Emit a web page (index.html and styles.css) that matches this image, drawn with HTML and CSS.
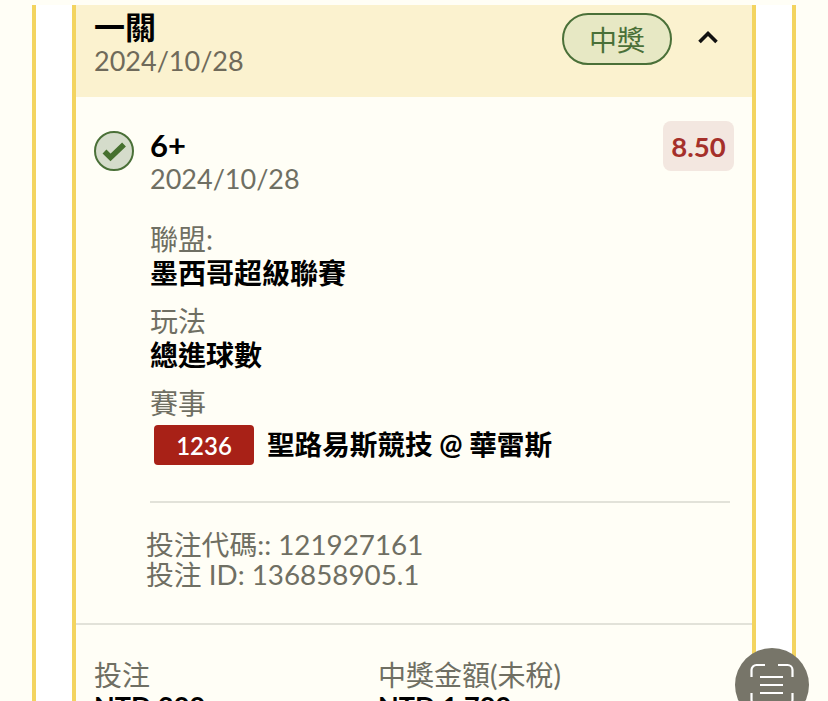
FILE: index.html
```html
<!DOCTYPE html>
<html lang="zh-Hant">
<head>
    <meta charset="UTF-8">
    <meta name="viewport" content="width=device-width, initial-scale=1.0">
    <title>投注紀錄</title>
    <link rel="stylesheet" href="styles.css">
</head>
<body>

<div class="outer">
    <div class="card">
        <header class="card-head">
            <div>
                <div class="head-title">一關</div>
                <div class="head-date">2024/10/28</div>
            </div>
            <div class="head-right">
                <span class="won-pill">中獎</span>
                <svg class="chevron" width="20" height="14" viewBox="0 0 20 14">
                    <path d="M1.500 12 10 3.500 18.500 12" fill="none" stroke="#111" stroke-width="3.600"/>
                </svg>
            </div>
        </header>

        <section class="leg">
            <svg class="check" width="40" height="40" viewBox="0 0 40 40">
                <circle cx="20" cy="20" r="19" fill="#d5dccb" stroke="#4a7038" stroke-width="2"/>
                <path d="M10.500 20.500 16.500 26.500 30 13.500" fill="none" stroke="#46702f" stroke-width="5.500"/>
            </svg>
            <div class="leg-body">
                <div class="leg-top">
                    <div>
                        <div class="pick">6+</div>
                        <div class="leg-date">2024/10/28</div>
                    </div>
                    <span class="odds">8.50</span>
                </div>

                <div class="field field-first">
                    <div class="field-label">聯盟:</div>
                    <div class="field-value">墨西哥超級聯賽</div>
                </div>
                <div class="field">
                    <div class="field-label">玩法</div>
                    <div class="field-value">總進球數</div>
                </div>
                <div class="field">
                    <div class="field-label">賽事</div>
                    <div class="match">
                        <span class="match-no">1236</span>
                        <span class="match-name">聖路易斯競技 @ 華雷斯</span>
                    </div>
                </div>
                <hr class="rule">
            </div>
        </section>

        <div class="codes">
            <div>投注代碼:: 121927161</div>
            <div>投注 ID: 136858905.1</div>
        </div>

        <div class="totals">
            <div class="total">
                <div class="field-label">投注</div>
                <div class="total-value">NTD 200</div>
            </div>
            <div class="total">
                <div class="field-label">中獎金額(未稅)</div>
                <div class="total-value">NTD 1,700</div>
            </div>
        </div>
    </div>
</div>

<button class="scan-btn" type="button" aria-label="掃描">
    <svg width="44" height="44" viewBox="0 0 44 44">
        <path d="M1.500 14V7a5 5 0 0 1 5-5H15M28 2h9.500a5 5 0 0 1 5 5v7M1.500 30v7a5 5 0 0 0 5 5H15M28 42h9.500a5 5 0 0 0 5-5v-7" fill="none" stroke="#fff" stroke-width="2.200"/>
        <path d="M10 14h23M10 22h23M10 30h23" fill="none" stroke="#fff" stroke-width="2.200"/>
    </svg>
</button>

</body>
</html>
```

FILE: styles.css
```css
html, body {
    height: 100%;
}
body {
    margin: 0;
    padding-top: 5px;
    box-sizing: border-box;
    overflow: hidden;
    background-color: #fffef6;
    font-family: Lato, "Noto Sans CJK TC", sans-serif;
    color: #000;
}
.outer {
    margin: 0 32px;
    padding: 0 36px;
    background-color: #fff;
    border-left: 4px solid #f3d460;
    border-right: 4px solid #f3d460;
}
.card {
    background-color: #fffef6;
    border-left: 4px solid #f3d460;
    border-right: 4px solid #f3d460;
}
.card-head {
    height: 92px;
    box-sizing: border-box;
    padding: 5px 34px 0 18px;
    display: flex;
    justify-content: space-between;
    background-color: #fbf2cf;
}
.head-title {
    font-size: 31px;
    line-height: 35px;
    font-weight: 700;
}
.head-date {
    font-size: 27px;
    line-height: 32px;
    color: #6f6a5a;
}
.head-right {
    display: flex;
    align-items: flex-start;
    gap: 26px;
    padding-top: 3px;
}
.won-pill {
    width: 110px;
    height: 52px;
    box-sizing: border-box;
    display: flex;
    align-items: center;
    justify-content: center;
    border: 2px solid #4a7038;
    border-radius: 26px;
    background-color: #e7e8c4;
    color: #4a7038;
    font-size: 28px;
}
.chevron {
    margin-top: 17px;
}
.leg {
    display: flex;
    align-items: flex-start;
    gap: 16px;
    padding: 24px 18px 0 18px;
}
.check {
    margin-top: 10px;
    flex: none;
}
.leg-body {
    flex: 1;
}
.leg-top {
    display: flex;
    justify-content: space-between;
    align-items: flex-start;
}
.pick {
    font-size: 31px;
    line-height: 32px;
    font-weight: 700;
    margin-top: 8px;
}
.leg-date {
    font-size: 27px;
    line-height: 36px;
    color: #6f6f63;
}
.odds {
    width: 71px;
    height: 50px;
    display: flex;
    align-items: center;
    justify-content: center;
    border-radius: 8px;
    background-color: #f3e7e0;
    color: #a5302a;
    font-size: 27.500px;
    font-weight: 700;
}
.field {
    margin-top: 14px;
}
.field-first {
    margin-top: 24px;
}
.field-label {
    font-size: 28px;
    line-height: 36px;
    color: #6f6f63;
}
.field-value {
    font-size: 28px;
    line-height: 32px;
    font-weight: 700;
}
.match {
    display: flex;
    align-items: center;
    gap: 13px;
    margin: 4px 0 0 4px;
}
.match-no {
    width: 100px;
    height: 40px;
    display: flex;
    align-items: center;
    justify-content: center;
    border-radius: 4px;
    background-color: #a82117;
    color: #fff;
    font-size: 24px;
    font-weight: 600;
}
.match-name {
    font-size: 27.600px;
    line-height: 40px;
    font-weight: 700;
}
.rule {
    margin: 36px 4px 0 0;
    border: none;
    border-top: 2px solid #e2e2d9;
}
.codes {
    padding: 27px 0 33px 70px;
    font-size: 27.800px;
    line-height: 30px;
    color: #6f6f63;
    border-bottom: 2px solid #e2e2d9;
}
.totals {
    display: flex;
    padding: 32px 0 0 18px;
}
.total {
    width: 284px;
}
.total-value {
    font-size: 27px;
    line-height: 26px;
    font-weight: 700;
}
.scan-btn {
    position: fixed;
    left: 735px;
    top: 648px;
    width: 74px;
    height: 74px;
    padding: 0;
    border: none;
    border-radius: 50%;
    background-color: #777569;
    display: flex;
    align-items: center;
    justify-content: center;
}
```
